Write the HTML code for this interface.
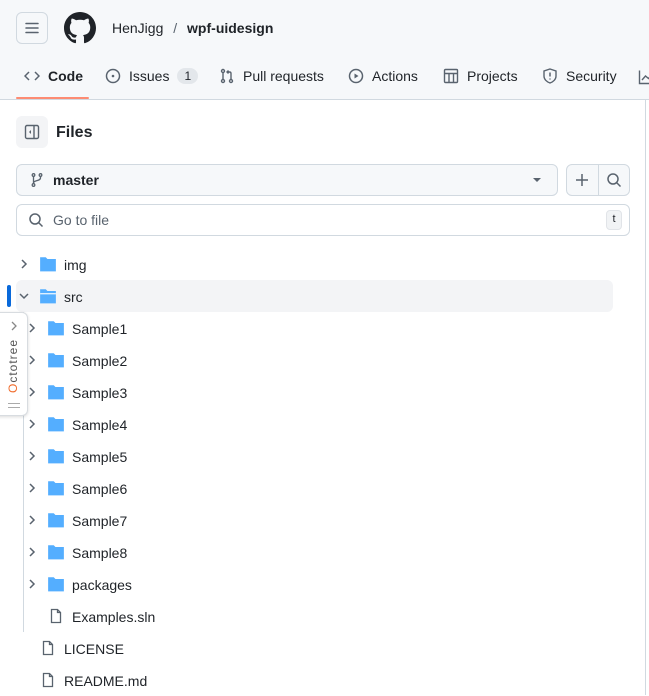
<!DOCTYPE html>
<html><head><meta charset="utf-8"><style>
*{box-sizing:border-box;margin:0;padding:0}
body{width:649px;height:695px;overflow:hidden;background:#fff;font-family:"Liberation Sans",sans-serif;color:#1f2328;position:relative;font-size:14px}
.abs{position:absolute}
.hdr{left:0;top:0;width:649px;height:100px;background:#f6f8fa;border-bottom:1px solid #d1d9e0}
.tab{position:absolute;top:68px;font-size:14px;color:#1f2328;display:flex;align-items:center;gap:8px}
svg{display:block}
.row{position:absolute;left:0;height:32px;display:flex;align-items:center;font-size:14px;color:#1f2328}
</style></head><body>
<div class="abs hdr"></div>
<div class="abs" style="left:16px;top:12px;width:32px;height:32px;border:1px solid #d1d9e0;border-radius:6px;background:#f6f8fa"></div>
<svg class="abs" style="left:24px;top:20px" width="16" height="16" viewBox="0 0 16 16"><path d="M2 3.5h12M2 8h12M2 12.5h12" stroke="#59636e" stroke-width="1.5" stroke-linecap="round"/></svg>
<svg class="abs" style="left:64px;top:12px" width="32" height="32" viewBox="0 0 16 16"><path fill="#1f2328" d="M8 0C3.58 0 0 3.58 0 8c0 3.54 2.29 6.53 5.47 7.59.4.07.55-.17.55-.38 0-.19-.01-.82-.01-1.49-2.01.37-2.530-.49-2.69-.94-.09-.23-.48-.94-.82-1.13-.28-.15-.68-.52-.01-.53.63-.01 1.08.58 1.23.82.72 1.21 1.87.87 2.33.66.07-.52.28-.87.51-1.07-1.78-.2-3.64-.89-3.640-3.95 0-.87.31-1.59.82-2.15-.08-.2-.36-1.02.08-2.12 0 0 .67-.21 2.2.82.64-.18 1.32-.27 2-.27.68 0 1.36.09 2 .27 1.53-1.04 2.2-.82 2.2-.82.44 1.1.16 1.92.08 2.12.51.56.82 1.27.82 2.15 0 3.07-1.87 3.750-3.65 3.95.29.25.54.73.54 1.48 0 1.07-.01 1.93-.01 2.2 0 .21.15.46.55.38A8.013 8.013 0 0016 8c0-4.42-3.58-8-8-8z"/></svg>
<div class="abs" style="left:112px;top:20px;font-size:14px">HenJigg <span style="color:#59636e;margin:0 6px">/</span> <b style="font-weight:600">wpf-uidesign</b></div>

<div class="tab" style="left:24px"><svg width="16" height="16" viewBox="0 0 16 16"><path d="M5 4L1 8l4 4M11 4l4 4-4 4" stroke="#59636e" stroke-width="1.5" fill="none"/></svg><b style="font-weight:600">Code</b></div>
<div class="abs" style="left:16px;top:97px;width:73px;height:2px;background:#fd8c73;border-radius:2px"></div>
<div class="tab" style="left:105px"><svg width="16" height="16" viewBox="0 0 16 16"><circle cx="8" cy="8" r="6.5" stroke="#59636e" stroke-width="1.5" fill="none"/><circle cx="8" cy="8" r="1.3" fill="#59636e"/></svg>Issues<span style="background:#e3e7eb;border-radius:10px;padding:1px 7px;font-size:12px">1</span></div>
<div class="tab" style="left:219px"><svg width="16" height="16" viewBox="0 0 16 16"><g stroke="#59636e" stroke-width="1.4" fill="none"><circle cx="4" cy="3" r="1.5"/><circle cx="4" cy="13" r="1.5"/><circle cx="12" cy="13" r="1.5"/><path d="M4 4.5v7M12 11.5V5.5c0-1-.5-1.5-1.5-1.5H8M9.5 2.5L8 4l1.5 1.5"/></g></svg>Pull requests</div>
<div class="tab" style="left:348px"><svg width="16" height="16" viewBox="0 0 16 16"><circle cx="8" cy="8" r="6.5" stroke="#59636e" stroke-width="1.5" fill="none"/><path d="M6.5 5.5v5l4-2.5z" fill="#59636e"/></svg>Actions</div>
<div class="tab" style="left:443px"><svg width="16" height="16" viewBox="0 0 16 16"><g stroke="#59636e" stroke-width="1.4" fill="none"><rect x="1.5" y="1.5" width="13" height="13" rx="1"/><path d="M1.5 5.5h13M6 5.5v9M10.5 5.5v9"/></g></svg>Projects</div>
<div class="tab" style="left:542px"><svg width="16" height="16" viewBox="0 0 16 16"><path d="M8 1l6 2v5c0 3.5-3 6-6 7-3-1-6-3.5-6-7V3z" stroke="#59636e" stroke-width="1.4" fill="none"/><path d="M8 4.5v4M8 10.5v1" stroke="#59636e" stroke-width="1.5"/></svg>Security</div>
<svg class="abs" style="left:638px;top:69px" width="16" height="16" viewBox="0 0 16 16"><path d="M1.5 1.5v13h13M4 11l3.5-4 3 2.5 4-5" stroke="#59636e" stroke-width="1.4" fill="none"/></svg>
<div class="abs" style="left:645px;top:100px;width:1px;height:595px;background:#d1d9e0"></div>

<div class="abs" style="left:16px;top:116px;width:32px;height:32px;border-radius:6px;background:#f3f4f6"></div>
<svg class="abs" style="left:24px;top:124px" width="16" height="16" viewBox="0 0 16 16"><g stroke="#59636e" stroke-width="1.4" fill="none"><rect x="1.5" y="1.5" width="13" height="13" rx="1.5"/><path d="M10 1.5v13"/></g><path d="M7 6l-2 2 2 2z" fill="#59636e"/></svg>
<div class="abs" style="left:56px;top:124px;font-size:16px;font-weight:600">Files</div>

<div class="abs" style="left:16px;top:164px;width:542px;height:32px;border:1px solid #d1d9e0;border-radius:6px;background:#f6f8fa"></div>
<svg class="abs" style="left:29px;top:172px" width="16" height="16" viewBox="0 0 16 16"><g stroke="#59636e" stroke-width="1.3" fill="none"><circle cx="4.5" cy="3" r="1.3"/><circle cx="11.5" cy="3" r="1.3"/><circle cx="4.5" cy="13" r="1.3"/><path d="M4.5 4.3v7.4M11.5 4.3v1.5c0 2-2 2.5-4 3s-3 1-3 2.5"/></g></svg>
<div class="abs" style="left:53px;top:172px;font-weight:600">master</div>
<svg class="abs" style="left:532px;top:177px" width="10" height="6" viewBox="0 0 10 6"><path d="M1 1h8L5 5z" fill="#59636e"/></svg>
<div class="abs" style="left:566px;top:164px;width:64px;height:32px;border:1px solid #d1d9e0;border-radius:6px;background:#f6f8fa"></div>
<div class="abs" style="left:598px;top:165px;width:1px;height:30px;background:#d1d9e0"></div>
<svg class="abs" style="left:574px;top:172px" width="16" height="16" viewBox="0 0 16 16"><path d="M8 2v12M2 8h12" stroke="#59636e" stroke-width="1.5"/></svg>
<svg class="abs" style="left:606px;top:172px" width="16" height="16" viewBox="0 0 16 16"><circle cx="7" cy="7" r="5" stroke="#59636e" stroke-width="1.5" fill="none"/><path d="M10.5 10.5l4 4" stroke="#59636e" stroke-width="1.5"/></svg>

<div class="abs" style="left:16px;top:204px;width:614px;height:32px;border:1px solid #d1d9e0;border-radius:6px;background:#fff"></div>
<svg class="abs" style="left:28px;top:212px" width="16" height="16" viewBox="0 0 16 16"><circle cx="7" cy="7" r="5" stroke="#59636e" stroke-width="1.5" fill="none"/><path d="M10.5 10.5l4 4" stroke="#59636e" stroke-width="1.5"/></svg>
<div class="abs" style="left:53px;top:212px;color:#59636e">Go to file</div>
<div class="abs" style="left:606px;top:210px;width:16px;height:20px;border-radius:4px;background:#f1f3f5;border:1px solid #e1e4e8;font-size:11px;text-align:center;line-height:17px;color:#1f2328">t</div>

<div class="abs" style="left:16px;top:280px;width:597px;height:32px;border-radius:6px;background:#f3f4f6"></div>
<div class="abs" style="left:7px;top:285px;width:4px;height:22px;border-radius:2px;background:#0969da"></div>
<div class="abs" style="left:23px;top:312px;width:1px;height:320px;background:#d1d9e0"></div>

<svg width="0" height="0" style="position:absolute"><defs>
<symbol id="fd" viewBox="0 0 16 16"><path d="M1 2h5l1.5 1.5H15v11H1z" fill="#54aeff"/></symbol>
<symbol id="fo" viewBox="0 0 16 16"><path d="M1 2h5l1.5 1.5H15v11H1z" fill="#54aeff"/><path d="M1 6h14" stroke="#fff" stroke-width="1"/></symbol>
<symbol id="ch" viewBox="0 0 16 16"><path d="M6 4l4 4-4 4" stroke="#59636e" stroke-width="1.5" fill="none"/></symbol>
<symbol id="cd" viewBox="0 0 16 16"><path d="M4 6l4 4 4-4" stroke="#59636e" stroke-width="1.5" fill="none"/></symbol>
<symbol id="fi" viewBox="0 0 16 16"><path d="M3.5 1.5h6l3 3v10h-9z" stroke="#59636e" stroke-width="1.3" fill="none"/><path d="M9.5 1.5v3h3" stroke="#59636e" stroke-width="1.3" fill="none"/></symbol>
</defs></svg>

<div class="row" style="top:248px"><svg class="abs" style="left:16px;top:8px" width="16" height="16"><use href="#ch"/></svg><svg class="abs" style="left:39px;top:7px" width="18" height="18"><use href="#fd"/></svg><span class="abs" style="left:64px;top:9px">img</span></div>
<div class="row" style="top:280px"><svg class="abs" style="left:16px;top:8px" width="16" height="16"><use href="#cd"/></svg><svg class="abs" style="left:39px;top:7px" width="18" height="18"><use href="#fo"/></svg><span class="abs" style="left:64px;top:9px">src</span></div>

<div class="row" style="top:312px"><svg class="abs" style="left:24px;top:8px" width="16" height="16"><use href="#ch"/></svg><svg class="abs" style="left:47px;top:7px" width="18" height="18"><use href="#fd"/></svg><span class="abs" style="left:72px;top:9px">Sample1</span></div>
<div class="row" style="top:344px"><svg class="abs" style="left:24px;top:8px" width="16" height="16"><use href="#ch"/></svg><svg class="abs" style="left:47px;top:7px" width="18" height="18"><use href="#fd"/></svg><span class="abs" style="left:72px;top:9px">Sample2</span></div>
<div class="row" style="top:376px"><svg class="abs" style="left:24px;top:8px" width="16" height="16"><use href="#ch"/></svg><svg class="abs" style="left:47px;top:7px" width="18" height="18"><use href="#fd"/></svg><span class="abs" style="left:72px;top:9px">Sample3</span></div>
<div class="row" style="top:408px"><svg class="abs" style="left:24px;top:8px" width="16" height="16"><use href="#ch"/></svg><svg class="abs" style="left:47px;top:7px" width="18" height="18"><use href="#fd"/></svg><span class="abs" style="left:72px;top:9px">Sample4</span></div>
<div class="row" style="top:440px"><svg class="abs" style="left:24px;top:8px" width="16" height="16"><use href="#ch"/></svg><svg class="abs" style="left:47px;top:7px" width="18" height="18"><use href="#fd"/></svg><span class="abs" style="left:72px;top:9px">Sample5</span></div>
<div class="row" style="top:472px"><svg class="abs" style="left:24px;top:8px" width="16" height="16"><use href="#ch"/></svg><svg class="abs" style="left:47px;top:7px" width="18" height="18"><use href="#fd"/></svg><span class="abs" style="left:72px;top:9px">Sample6</span></div>
<div class="row" style="top:504px"><svg class="abs" style="left:24px;top:8px" width="16" height="16"><use href="#ch"/></svg><svg class="abs" style="left:47px;top:7px" width="18" height="18"><use href="#fd"/></svg><span class="abs" style="left:72px;top:9px">Sample7</span></div>
<div class="row" style="top:536px"><svg class="abs" style="left:24px;top:8px" width="16" height="16"><use href="#ch"/></svg><svg class="abs" style="left:47px;top:7px" width="18" height="18"><use href="#fd"/></svg><span class="abs" style="left:72px;top:9px">Sample8</span></div>
<div class="row" style="top:568px"><svg class="abs" style="left:24px;top:8px" width="16" height="16"><use href="#ch"/></svg><svg class="abs" style="left:47px;top:7px" width="18" height="18"><use href="#fd"/></svg><span class="abs" style="left:72px;top:9px">packages</span></div>
<div class="row" style="top:600px"><svg class="abs" style="left:48px;top:8px" width="16" height="16"><use href="#fi"/></svg><span class="abs" style="left:72px;top:9px">Examples.sln</span></div>
<div class="row" style="top:632px"><svg class="abs" style="left:40px;top:8px" width="16" height="16"><use href="#fi"/></svg><span class="abs" style="left:64px;top:9px">LICENSE</span></div>
<div class="row" style="top:664px"><svg class="abs" style="left:40px;top:8px" width="16" height="16"><use href="#fi"/></svg><span class="abs" style="left:64px;top:9px">README.md</span></div>

<div class="abs" style="left:-4px;top:312px;width:32px;height:104px;background:#fff;border:1px solid #d8dce0;border-radius:0 6px 6px 0;box-shadow:0 1px 3px rgba(0,0,0,.15)"></div>
<svg class="abs" style="left:9px;top:320px" width="10" height="12" viewBox="0 0 10 12"><path d="M3 2l4 4-4 4" stroke="#888" stroke-width="1.3" fill="none"/></svg>
<div class="abs" style="left:6px;top:393px;transform:rotate(-90deg);transform-origin:0 0;font-size:12px;color:#555;white-space:nowrap;letter-spacing:1px"><span style="color:#f06a2a">O</span>ctotree</div>
<div class="abs" style="left:8px;top:403px;width:12px;height:1px;background:#aaa"></div>
<div class="abs" style="left:8px;top:407px;width:12px;height:1px;background:#aaa"></div>
</body></html>
